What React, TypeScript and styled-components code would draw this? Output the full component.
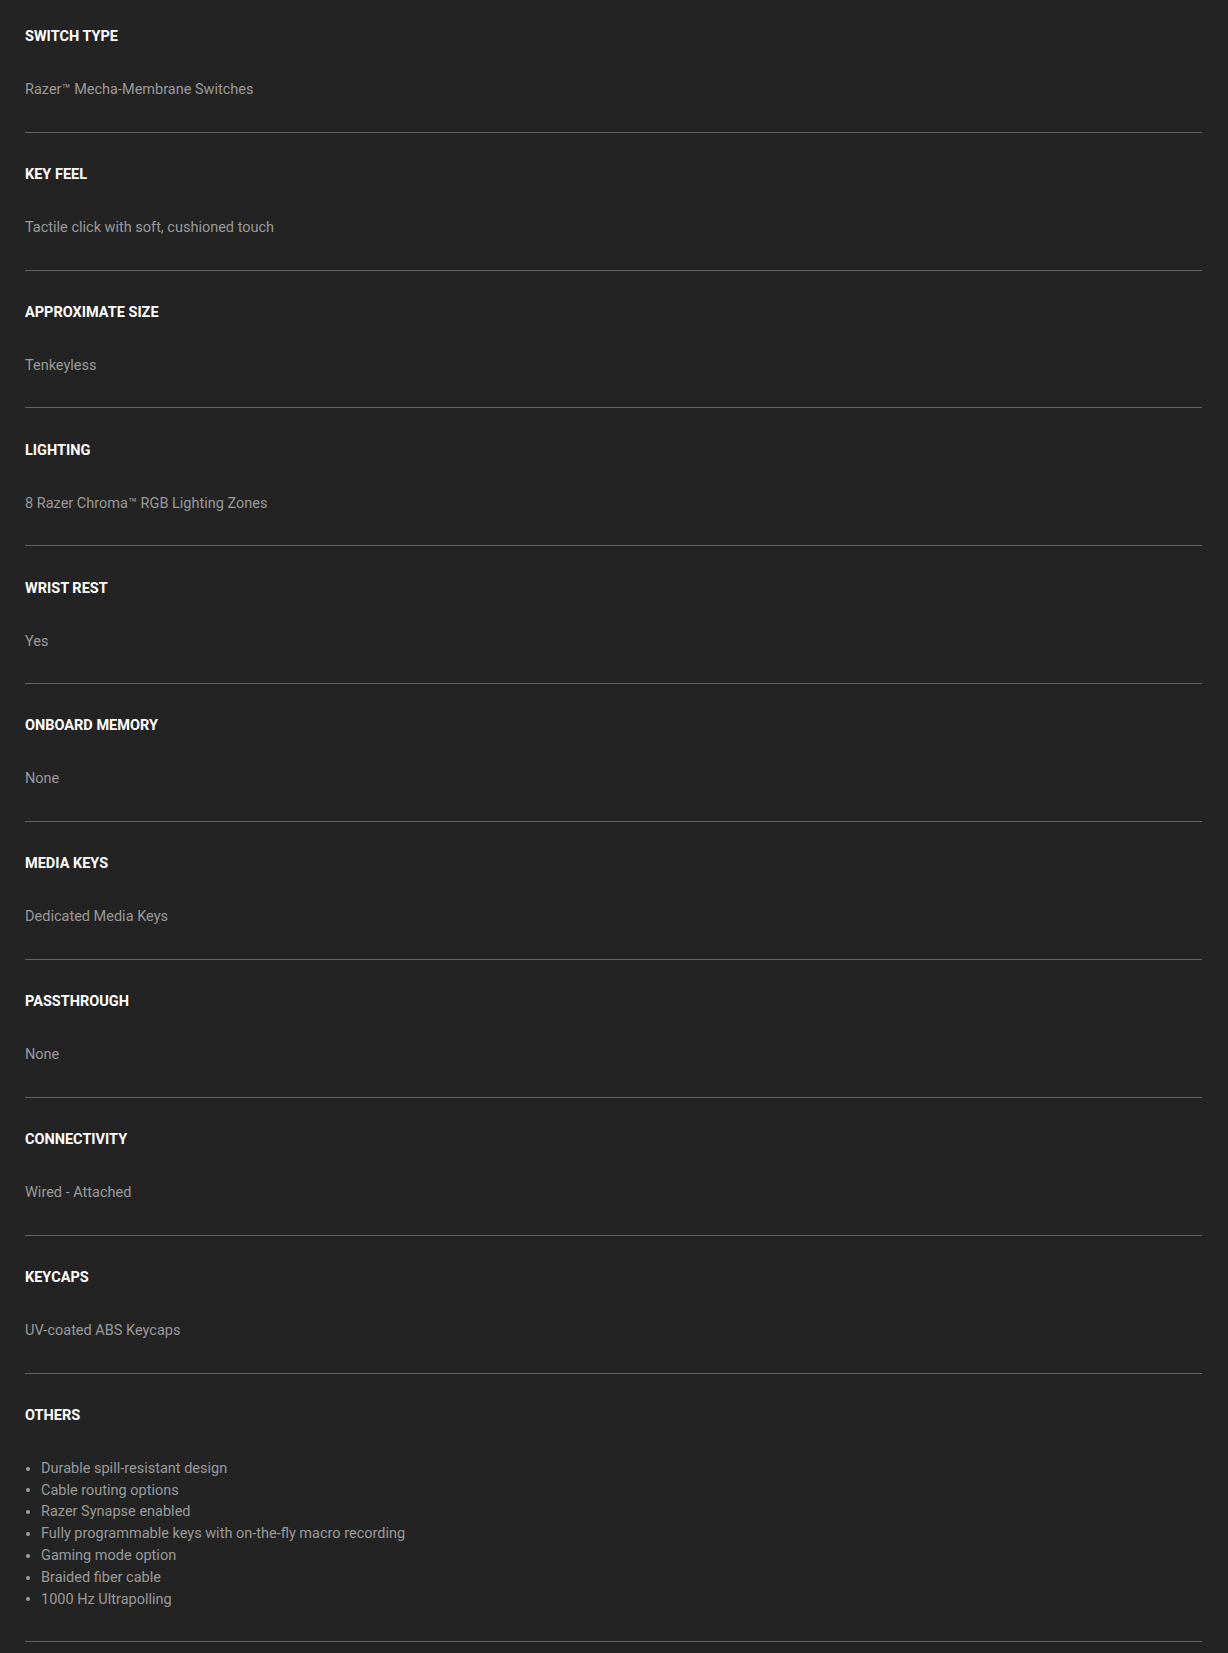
import React from "react";
import styled, { createGlobalStyle } from "styled-components";

const GlobalStyle = createGlobalStyle`
  html, body {
    margin: 0;
    padding: 0;
    background: #232323;
  }
  body {
    font-family: Roboto, "Liberation Sans", Arial, sans-serif;
    -webkit-font-smoothing: antialiased;
  }
`;

const Page = styled.div`
  background: #232323;
  min-height: 1653px;
  padding: 0 26px 0 25px;
  box-sizing: border-box;
`;

const SpecList = styled.dl`
  margin: 0;
  display: flex;
  flex-direction: column;
`;

const Spec = styled.div`
  padding: 31.2px 0 30.7px;
  border-bottom: 1px solid #626262;
  &:first-child {
    padding-top: 26px;
  }
`;

const Label = styled.dt`
  margin: 0 0 31px;
  font-size: 14.5px;
  line-height: 22px;
  font-weight: 700;
  color: #ffffff;
  text-transform: uppercase;
`;

const Value = styled.dd`
  margin: 0;
  font-size: 14.5px;
  line-height: 22px;
  font-weight: 400;
  color: #9a9a9a;
`;

const Bullets = styled.ul`
  margin: 0;
  padding: 0;
  list-style: none;
  display: flex;
  flex-direction: column;
`;

const Bullet = styled.li`
  display: flex;
  align-items: center;
  gap: 11px;
  font-size: 14.5px;
  line-height: 21.8px;
  color: #9a9a9a;
  &::before {
    content: "";
    flex: none;
    width: 4px;
    height: 4px;
    margin-left: 1px;
    border-radius: 50%;
    background: #a0a0a0;
  }
`;

type Item = { label: string; value: string | string[] };

const specs: Item[] = [
  { label: "Switch Type", value: "Razer™ Mecha-Membrane Switches" },
  { label: "Key Feel", value: "Tactile click with soft, cushioned touch" },
  { label: "Approximate Size", value: "Tenkeyless" },
  { label: "Lighting", value: "8 Razer Chroma™ RGB Lighting Zones" },
  { label: "Wrist Rest", value: "Yes" },
  { label: "Onboard Memory", value: "None" },
  { label: "Media Keys", value: "Dedicated Media Keys" },
  { label: "Passthrough", value: "None" },
  { label: "Connectivity", value: "Wired - Attached" },
  { label: "Keycaps", value: "UV-coated ABS Keycaps" },
  {
    label: "Others",
    value: [
      "Durable spill-resistant design",
      "Cable routing options",
      "Razer Synapse enabled",
      "Fully programmable keys with on-the-fly macro recording",
      "Gaming mode option",
      "Braided fiber cable",
      "1000 Hz Ultrapolling",
    ],
  },
];

export default function App() {
  return (
    <>
      <GlobalStyle />
      <Page>
        <SpecList>
          {specs.map((s) => (
            <Spec key={s.label}>
              <Label>{s.label}</Label>
              <Value>
                {Array.isArray(s.value) ? (
                  <Bullets>
                    {s.value.map((v) => (
                      <Bullet key={v}>{v}</Bullet>
                    ))}
                  </Bullets>
                ) : (
                  s.value
                )}
              </Value>
            </Spec>
          ))}
        </SpecList>
      </Page>
    </>
  );
}
